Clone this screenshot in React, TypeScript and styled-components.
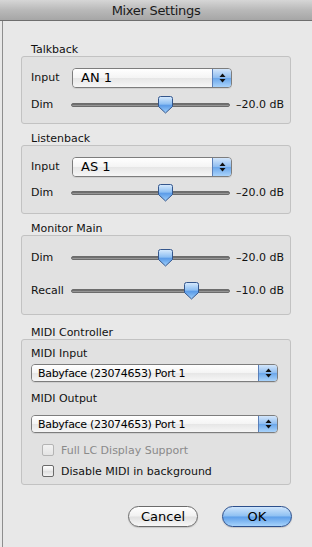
import React from "react";
import styled, { createGlobalStyle } from "styled-components";

const Global = createGlobalStyle`
  html, body { margin: 0; padding: 0; }
  body {
    width: 312px; height: 547px; overflow: hidden;
    font-family: "DejaVu Sans", "Liberation Sans", sans-serif;
    background: #e8e8e8;
  }
`;

const Window = styled.div`
  width: 312px;
  height: 547px;
  display: flex;
  flex-direction: column;
  background: linear-gradient(to right, #e8e8e8 2px, #8e8e8e 2px, #8e8e8e 3px, #e8e8e8 3px);
`;

const TitleBar = styled.div`
  height: 20px;
  flex: none;
  border-bottom: 1px solid #6e6e6e;
  background: linear-gradient(#d6d6d6, #b9b9b9 50%, #a6a6a6);
  display: flex;
  align-items: center;
  justify-content: center;
  font-size: 13px;
  color: #1a1a1a;
  letter-spacing: -0.3px;
`;

const Content = styled.div`
  display: flex;
  flex-direction: column;
  padding: 22px 21px 0 21px;
`;

const Section = styled.div<{ $gap?: number }>`
  display: flex;
  flex-direction: column;
  margin-bottom: ${(p) => p.$gap ?? 8}px;
`;

const SectionLabel = styled.div`
  font-size: 11px;
  line-height: 13px;
  height: 13px;
  padding-left: 10px;
  color: #111;
`;

const Box = styled.div<{ $pt: number; $pb: number; $gap: number }>`
  width: 270px;
  box-sizing: border-box;
  border: 1px solid #c2c2c2;
  border-radius: 3px;
  background: #e1e1e1;
  padding: ${(p) => p.$pt}px 9px ${(p) => p.$pb}px 9px;
  display: flex;
  flex-direction: column;
  gap: ${(p) => p.$gap}px;
`;

const Row = styled.div`
  display: flex;
  align-items: center;
  height: 19px;
`;

const RowLabel = styled.div`
  width: 41px;
  flex: none;
  font-size: 11px;
  color: #111;
`;

const PopupWrap = styled.div<{ $w: number; $h: number }>`
  width: ${(p) => p.$w}px;
  height: ${(p) => p.$h}px;
  box-sizing: border-box;
  display: flex;
  border: 1px solid #7d7d7d;
  border-radius: 4px;
  overflow: hidden;
  box-shadow: 0 1px 0 rgba(0,0,0,0.08);
  flex: none;
`;

const PopupText = styled.div<{ $fs: number }>`
  flex: 1;
  display: flex;
  align-items: center;
  padding-left: ${(p) => (p.$fs > 12 ? 8 : 6)}px;
  font-size: ${(p) => p.$fs}px;
  letter-spacing: ${(p) => (p.$fs > 12 ? 0 : -0.3)}px;
  color: #000;
  background: linear-gradient(#ffffff, #f4f4f4 50%, #e6e6e6 51%, #f6f6f6);
  white-space: nowrap;
`;

const PopupArrows = styled.div`
  width: 18px;
  flex: none;
  border-left: 1px solid #5a7fb8;
  background: linear-gradient(#d3e6fb, #8dbcf0 50%, #6aa6ea 51%, #a9d3fb);
  display: flex;
  align-items: center;
  justify-content: center;
`;

const Popup = ({ value, w, h, fs }: { value: string; w: number; h: number; fs: number }) => (
  <PopupWrap $w={w} $h={h}>
    <PopupText $fs={fs}>{value}</PopupText>
    <PopupArrows>
      <svg width="7" height="10" viewBox="0 0 7 10">
        <path d="M3.5 0.5 L6.5 4 H0.5 Z" fill="#111" />
        <path d="M0.5 6 H6.5 L3.5 9.5 Z" fill="#111" />
      </svg>
    </PopupArrows>
  </PopupWrap>
);

const Track = styled.div`
  position: relative;
  width: 159px;
  height: 4px;
  border-radius: 2px;
  background: linear-gradient(#5c5c5c, #8a8a8a 60%, #a8a8a8);
  border: 1px solid #6c6c6c;
  box-sizing: border-box;
  flex: none;
`;

const Thumb = styled.div`
  position: absolute;
  top: -8px;
  width: 15px;
  height: 18px;
  margin-left: -7px;
`;

const Value = styled.div`
  margin-left: 6px;
  font-size: 11px;
  color: #111;
  white-space: nowrap;
`;

const SliderRow = ({ label, pos, value }: { label: string; pos: number; value: string }) => (
  <Row>
    <RowLabel style={{ width: 40 }}>{label}</RowLabel>
    <Track>
      <Thumb style={{ left: `${pos * 100}%` }}>
        <svg width="15" height="18" viewBox="0 0 15 18">
          <defs>
            <linearGradient id="tg" x1="0" y1="0" x2="0" y2="1">
              <stop offset="0" stopColor="#d9ebfd" />
              <stop offset="0.45" stopColor="#8fc0f3" />
              <stop offset="0.55" stopColor="#5c9ce8" />
              <stop offset="1" stopColor="#9fd0fb" />
            </linearGradient>
          </defs>
          <path
            d="M2.5 0.5 H12.5 Q14.5 0.5 14.5 2.5 V10.5 L7.5 17 L0.5 10.5 V2.5 Q0.5 0.5 2.5 0.5 Z"
            fill="url(#tg)"
            stroke="#34568c"
            strokeWidth="1"
          />
        </svg>
      </Thumb>
    </Track>
    <Value>{value}</Value>
  </Row>
);

const FieldLabel = styled.div<{ $mb: number }>`
  font-size: 11px;
  line-height: 13px;
  height: 13px;
  color: #111;
  margin-bottom: ${(p) => p.$mb}px;
`;

const Field = styled.div<{ $mb: number }>`
  display: flex;
  flex-direction: column;
  margin-bottom: ${(p) => p.$mb}px;
`;

const CheckRow = styled.div<{ $disabled?: boolean }>`
  display: flex;
  align-items: center;
  height: 14px;
  padding-left: 11px;
  font-size: 11px;
  color: ${(p) => (p.$disabled ? "#8a8a8a" : "#111")};
`;

const CheckBox = styled.div<{ $disabled?: boolean }>`
  width: 12px;
  height: 12px;
  box-sizing: border-box;
  border-radius: 2px;
  border: 1px solid ${(p) => (p.$disabled ? "#b4b4b4" : "#6a6a6a")};
  background: ${(p) =>
    p.$disabled ? "linear-gradient(#f2f2f2, #e4e4e4)" : "linear-gradient(#ffffff, #e9e9e9 50%, #dedede 51%, #f3f3f3)"};
  margin-right: 7px;
  flex: none;
`;

const Buttons = styled.div`
  display: flex;
  justify-content: flex-end;
  gap: 24px;
  margin-top: 21px;
  width: 271px;
`;

const Button = styled.div<{ $primary?: boolean }>`
  width: 70px;
  height: 21px;
  box-sizing: border-box;
  border-radius: 11px;
  display: flex;
  align-items: center;
  justify-content: center;
  font-size: 13px;
  color: #000;
  border: 1px solid ${(p) => (p.$primary ? "#2c4f8c" : "#6b6b6b")};
  background: ${(p) =>
    p.$primary
      ? "linear-gradient(#cfe5fc, #8ec0f2 48%, #5d9ee9 52%, #a7d3fb)"
      : "linear-gradient(#ffffff, #f1f1f1 48%, #e0e0e0 52%, #f7f7f7)"};
  box-shadow: 0 1px 1px rgba(0,0,0,0.15);
`;

export default function App() {
  return (
    <>
      <Global />
      <Window>
        <TitleBar>Mixer Settings</TitleBar>
        <Content>
          <Section $gap={8}>
            <SectionLabel>Talkback</SectionLabel>
            <Box $pt={11} $pb={9} $gap={8}>
              <Row>
                <RowLabel>Input</RowLabel>
                <Popup value="AN 1" w={160} h={20} fs={13} />
              </Row>
              <SliderRow label="Dim" pos={0.59} value="–20.0 dB" />
            </Box>
          </Section>
          <Section $gap={8}>
            <SectionLabel>Listenback</SectionLabel>
            <Box $pt={11} $pb={11} $gap={7}>
              <Row>
                <RowLabel>Input</RowLabel>
                <Popup value="AS 1" w={160} h={20} fs={13} />
              </Row>
              <SliderRow label="Dim" pos={0.59} value="–20.0 dB" />
            </Box>
          </Section>
          <Section $gap={11}>
            <SectionLabel>Monitor Main</SectionLabel>
            <Box $pt={12} $pb={14} $gap={14}>
              <SliderRow label="Dim" pos={0.59} value="–20.0 dB" />
              <SliderRow label="Recall" pos={0.76} value="–10.0 dB" />
            </Box>
          </Section>
          <Section $gap={0}>
            <SectionLabel>MIDI Controller</SectionLabel>
            <Box $pt={7} $pb={6} $gap={0} style={{ paddingRight: 12 }}>
              <Field $mb={10}>
                <FieldLabel $mb={4}>MIDI Input</FieldLabel>
                <Popup value="Babyface (23074653) Port 1" w={247} h={18} fs={11} />
              </Field>
              <Field $mb={10}>
                <FieldLabel $mb={10}>MIDI Output</FieldLabel>
                <Popup value="Babyface (23074653) Port 1" w={247} h={18} fs={11} />
              </Field>
              <CheckRow $disabled style={{ marginBottom: 7 }}>
                <CheckBox $disabled />
                Full LC Display Support
              </CheckRow>
              <CheckRow>
                <CheckBox />
                Disable MIDI in background
              </CheckRow>
            </Box>
          </Section>
          <Buttons>
            <Button>Cancel</Button>
            <Button $primary>OK</Button>
          </Buttons>
        </Content>
      </Window>
    </>
  );
}
